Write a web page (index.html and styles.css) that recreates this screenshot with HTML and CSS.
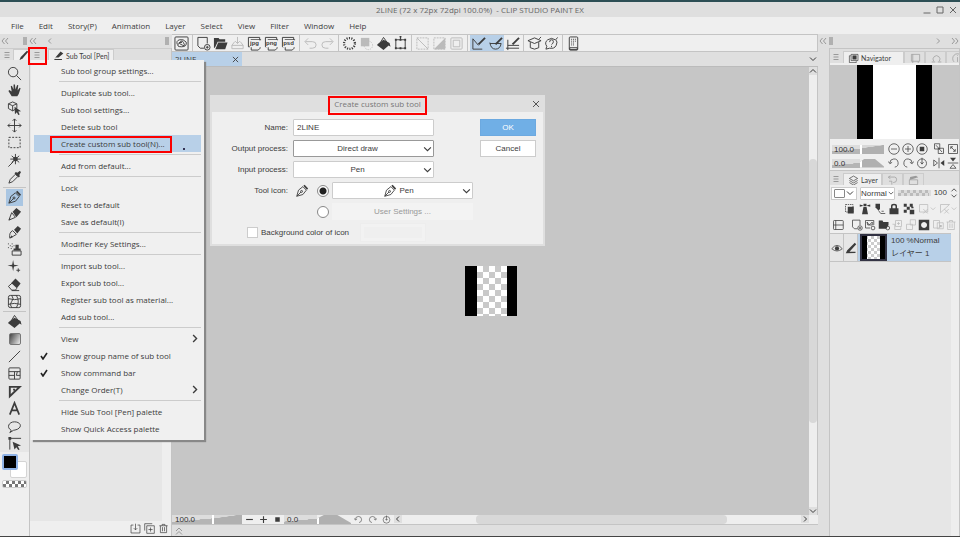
FILE: index.html
```html
<!DOCTYPE html>
<html lang="en">
<head>
<meta charset="utf-8">
<title>2LINE - CLIP STUDIO PAINT EX</title>
<link rel="stylesheet" href="styles.css">
</head>
<body>
<svg class="defs" aria-hidden="true">
  <symbol id="dleft" viewBox="0 0 8 8"><path d="M3.500 1 1 4l2.500 3M7 1 4.500 4 7 7"/></symbol>
  <symbol id="dright" viewBox="0 0 8 8"><path d="M1 1l2.500 3L1 7M4.500 1 7 4 4.500 7"/></symbol>
  <symbol id="dup" viewBox="0 0 8 8"><path d="M1 4l3-3 3 3M1 7.500l3-3 3 3"/></symbol>
  <symbol id="left" viewBox="0 0 8 8"><path d="M5 1.500 2.500 4 5 6.500"/></symbol>
  <symbol id="right" viewBox="0 0 8 8"><path d="M3 1.500 5.500 4 3 6.500"/></symbol>
  <symbol id="down" viewBox="0 0 8 8"><path d="M1 2.500 4 5.500l3-3"/></symbol>
  <symbol id="up" viewBox="0 0 8 8"><path d="M1 5.500 4 2.500l3 3"/></symbol>
  <symbol id="cross" viewBox="0 0 8 8"><path d="M1 1l6 6M7 1 1 7"/></symbol>
  <symbol id="burger" viewBox="0 0 8 8"><path d="M1.500 1.500h5M1.500 4h5M1.500 6.500h5"/></symbol>
  <symbol id="check" viewBox="0 0 8 8"><path d="M1 4l2 3 4-6" stroke-width="1.600"/></symbol>
  <symbol id="pen" viewBox="0 0 16 16"><path d="M2 14 4 7l5-4 4 4-4 5zM2 14l5-5"/><path class="f" d="M9.500 2 11 .8 15 5l-1.300 1.500z"/><circle cx="7.500" cy="8.500" r="1.100"/></symbol>
  <symbol id="undo" viewBox="0 0 16 16"><path d="M5.500 2.500 2 6l3.500 3.500M2.500 6H10q4 0 4 3.500T10 13H7"/></symbol>
  <symbol id="redo" viewBox="0 0 16 16"><path d="M10.500 2.500 14 6l-3.500 3.500M13.500 6H6Q2 6 2 9.500T6 13h3"/></symbol>
  <symbol id="rotl" viewBox="0 0 16 16"><path d="M9 13.500a5.500 5.500 0 1 0-6.500-5.500M.5 6l2 3 3-2"/></symbol>
  <symbol id="rotr" viewBox="0 0 16 16"><path d="M7 13.500a5.500 5.500 0 1 1 6.500-5.500M15.500 6l-2 3-3-2"/></symbol>
  <symbol id="reset" viewBox="0 0 16 16"><circle cx="8" cy="8.500" r="6"/><path d="M8 1v8M6 7l2 2.500L10 7"/></symbol>
  <symbol id="new" viewBox="0 0 16 16"><path d="M8.500 13H4.500L2 10.500V1.500h10V8"/><circle cx="12" cy="12" r="3"/><path d="M12 10.500v3M10.500 12h3"/></symbol>
  <symbol id="folder" viewBox="0 0 16 16"><path class="f" d="M1 2h5l1 1.500h6V6H5l-3 6.500H1zM5.500 6.800h10L13 14H2.500z"/></symbol>
  <symbol id="bucket" viewBox="0 0 16 16"><path class="f" d="M2.500 8 8 4l6.500 3.500 1 4-2-1.500L8 15 1 9.500z"/><path d="M4 8 8 1.500 12 7"/></symbol>
  <symbol id="trash" viewBox="0 0 16 16"><path d="M2 4h12M6 4V2h4v2M3.500 4v10h9V4M6.500 6v6M9.500 6v6"/></symbol>
  <symbol id="layers" viewBox="0 0 16 16"><path d="M2 5l6-3.500L14 5 8 8.500zM2 8l6 3.500L14 8M2 11l6 3.500 6-3.500"/></symbol>
  <symbol id="image" viewBox="0 0 16 16"><path d="M4.500 2h10v9h-10zM4 4H2v10h10v-2"/><path class="f" d="M6.500 3.500h6v6h-6z"/></symbol>
  <symbol id="file" viewBox="0 0 16 16"><path d="M3 11.500H1.500V1.500h12V4M14 12v1l-2 2H4.500v-3M4 4h11"/></symbol>
</svg>

<div class="app">
  <header class="titlebar">
    <h1>2LINE (72 x 72px 72dpi 100.0%)&nbsp; - CLIP STUDIO PAINT EX</h1>
    <div class="window-buttons">
      <button type="button" aria-label="Minimize"><svg viewBox="0 0 8 8"><path d="M.5 7h7"/></svg></button>
      <button type="button" aria-label="Maximize"><svg viewBox="0 0 8 8"><path d="M1 1h6v6H1z"/></svg></button>
      <button type="button" aria-label="Close"><svg><use href="#cross"/></svg></button>
    </div>
  </header>

  <nav class="menubar">
    <button type="button">File</button><button type="button">Edit</button><button type="button">Story(P)</button><button type="button">Animation</button><button type="button">Layer</button><button type="button">Select</button><button type="button">View</button><button type="button">Filter</button><button type="button">Window</button><button type="button">Help</button>
  </nav>

  <main class="workspace">
    <aside class="dock-left">
      <div class="dock-head">
        <svg><use href="#dleft"/></svg><i class="grip"></i><svg><use href="#dleft"/></svg><svg class="gap"><use href="#left"/></svg><i class="grip end"></i>
      </div>
      <div class="dock-columns">
        <section class="tool-palette">
          <div class="tabs">
            <button type="button" class="burger" aria-label="Tool menu"><svg><use href="#burger"/></svg></button>
            <div class="tab"><svg viewBox="0 0 16 16"><path class="f" d="M2 15l2-5L13 1l2 1.500L7 12z"/></svg></div>
          </div>
          <div class="tools">
            <div class="tool-group">
              <button type="button" aria-label="Magnify"><svg viewBox="0 0 16 16"><circle cx="6.500" cy="6.500" r="5"/><path d="M10 10l5 5"/></svg></button>
              <button type="button" aria-label="Hand"><svg viewBox="0 0 16 16"><path class="f" d="M5 14 1.500 8.500 2.500 7.500 5 9 4 3.500 5.200 3 7 7V1.500h1.500L9 7l1.800-5 1.200.4L11.300 8l2.200-3 1 .6-2 6L11 14z"/></svg></button>
              <button type="button" aria-label="Operation"><svg viewBox="0 0 16 16"><path d="M6 1l4.500 2v5L6 10.500 1.500 8V3zM1.500 3 6 5l4.500-2M6 5v5.500"/><path class="f" d="M8 6l7 5-3 .3 1.500 3-1.500.7-1.500-3L8.500 14z"/></svg></button>
              <button type="button" aria-label="Move layer"><svg viewBox="0 0 16 16"><path d="M8 1v14M1 8h14M6 3l2-2 2 2M6 13l2 2 2-2M3 6 1 8l2 2M13 6l2 2-2 2"/></svg></button>
              <button type="button" aria-label="Selection area"><svg viewBox="0 0 16 16"><path stroke-dasharray="2 1.500" d="M2 2.500h12v11H2z"/></svg></button>
              <button type="button" aria-label="Auto select"><svg viewBox="0 0 16 16"><path d="M9 1v11M5 3l8 7M13 3 5 10M3.500 6.500h11M7 9l-5.500 5.500"/><circle class="f" cx="9" cy="6.500" r="2.500"/></svg></button>
              <button type="button" aria-label="Eyedropper"><svg viewBox="0 0 16 16"><path d="M2 14l1.500-4L9 4.500 11.500 7 6 12.500z"/><path class="f" d="M8 3.500 12.500 8 14 6.500l-1-1L15 2l-1.500-1L11 3 9.500 2z"/></svg></button>
            </div>
            <hr>
            <div class="tool-group">
              <button type="button" class="active" aria-label="Pen"><svg><use href="#pen"/></svg></button>
              <button type="button" aria-label="Pencil"><svg viewBox="0 0 16 16"><path d="M2 14 5 6l4 5z"/><path class="f" d="M6 5l4-4 5 4-5 6zM2 14l2-1-1-1z"/></svg></button>
              <button type="button" aria-label="Brush"><svg viewBox="0 0 16 16"><path d="M3 14Q2 8 6 6l4 4Q7 12 3 14z"/><path class="f" d="M7.500 5l4-4 3.500 3-4 5zM3 14l2-3 1 2z"/></svg></button>
              <button type="button" aria-label="Airbrush"><svg viewBox="0 0 16 16"><path d="M1 2h1M3 4h1M1 6h1M5 2h1M5 5h1M4 7h1M7 4h1"/><path class="f" d="M9 3h3.500v4h2v2H7V7h2z"/><path d="M5.500 9.500h9.500V14H5.500z"/></svg></button>
              <button type="button" aria-label="Decoration"><svg viewBox="0 0 16 16"><path class="f" d="M6.500 1l1 5 5 1-5 1-1 5-1-5-5-1 5-1z"/><path d="M12 10v4M10 12h4"/></svg></button>
              <button type="button" aria-label="Eraser"><svg viewBox="0 0 16 16"><path d="M6 6 1.500 10l3.500 4h4l1.500-2M5 14.500h8"/><path class="f" d="M9 1.500 14.500 7 10.500 12 4.500 6.500z"/></svg></button>
              <button type="button" aria-label="Liquify"><svg viewBox="0 0 16 16"><rect x="1.500" y="1.500" width="13" height="13" rx="2"/><path d="M5 1.500Q8 5 5 8t0 6.500M10 1.500Q14 8 10 14.500M1.500 5Q8 7 14.500 5M1.500 11q6-2 13 0"/></svg></button>
            </div>
            <hr>
            <div class="tool-group last">
              <button type="button" aria-label="Fill"><svg><use href="#bucket"/></svg></button>
              <button type="button" aria-label="Gradient"><span class="gradient"></span></button>
              <button type="button" aria-label="Line"><svg viewBox="0 0 16 16"><path d="M2 14 14 2"/></svg></button>
              <button type="button" aria-label="Frame"><svg viewBox="0 0 16 16"><rect x="2" y="2" width="12" height="12" rx="1"/><path d="M2 6h12M2 10h6M8 6v8M11 6l-1 4h4"/></svg></button>
              <button type="button" aria-label="Ruler"><svg viewBox="0 0 16 16"><path stroke-width="2" d="M3 13V3h10.500zM6.500 6h2"/></svg></button>
              <button type="button" aria-label="Text"><svg viewBox="0 0 16 16"><path stroke-width="1.800" d="M3 14.500 8 2l5 12.500M5 10h6"/></svg></button>
              <button type="button" aria-label="Balloon"><svg viewBox="0 0 16 16"><path d="M4.500 12C-1 9 2 3 8 3s9 5 3 8q-3 1-4 1l-4 2.500z"/></svg></button>
              <button type="button" aria-label="Correct line"><svg viewBox="0 0 16 16"><path d="M3 2.500h12M3 2.500v12"/><path class="f" d="M1.500 1h3v3h-3zM6 6l9 4-3.500 1 2 3.500-1.500.5-2-3-2 2.500z"/></svg></button>
            </div>
          </div>
          <div class="swatches"><i class="sub"></i><i class="main"></i></div>
          <div class="transparent"></div>
        </section>

        <section class="subtool-palette">
          <div class="tabs">
            <button type="button" class="burger" aria-label="Sub tool menu"><svg><use href="#burger"/></svg></button>
            <div class="tab"><svg viewBox="0 0 16 16"><path class="f" d="M2 14l2-4L11 2l4 3-7 6H4zM2 13h11v1.500H2z"/></svg>Sub Tool [Pen]</div>
          </div>
          <div class="subtool-list"></div>
          <footer>
            <svg viewBox="0 0 16 16"><path d="M5 3H1.500v11.500h13V3H11M8 1v9M5.500 7.500 8 10l2.500-2.500"/></svg>
            <svg viewBox="0 0 16 16"><path d="M4 4h11v11H4zM1 11V1h11M9.500 6.500v6M6.500 9.500h6"/></svg>
            <svg><use href="#trash"/></svg>
          </footer>
        </section>
      </div>
    </aside>

    <section class="center">
      <div class="commandbar">
        <button type="button" class="home" aria-label="Clip Studio"><svg viewBox="0 0 16 16"><rect x="1" y="1" width="14" height="14" rx="1"/><path d="M3.500 9Q2 5 6 4t7 2.500q1 5-5 5T5 8t4-2.500T11 9 7.500 9t1-2"/></svg></button>
        <i class="sep"></i>
        <button type="button" aria-label="New"><svg><use href="#new"/></svg></button>
        <button type="button" aria-label="Open"><svg><use href="#folder"/></svg></button>
        <button type="button" disabled aria-label="Save"><svg viewBox="0 0 16 16"><path d="M5 6 2 10v3.500h12V10l-3-4M2 10h12M8 1v7M5.500 5.500 8 8l2.500-2.500"/></svg></button>
        <button type="button" class="export"><svg><use href="#file"/></svg><span>jpg</span></button>
        <button type="button" class="export"><svg><use href="#file"/></svg><span>png</span></button>
        <button type="button" class="export"><svg><use href="#file"/></svg><span>psd</span></button>
        <i class="sep"></i>
        <button type="button" disabled aria-label="Undo"><svg><use href="#undo"/></svg></button>
        <button type="button" disabled aria-label="Redo"><svg><use href="#redo"/></svg></button>
        <i class="sep"></i>
        <button type="button" aria-label="Clear"><svg viewBox="0 0 16 16"><circle cx="8" cy="8" r="5.800" stroke-width="2.400" stroke-dasharray="1.200 1.400"/></svg></button>
        <button type="button" disabled aria-label="Clear outside"><svg viewBox="0 0 16 16"><path class="f" d="M2 2h9v9H2z"/><circle cx="10" cy="10" r="4.500" stroke-dasharray="1 1"/></svg></button>
        <button type="button" aria-label="Fill"><svg><use href="#bucket"/></svg></button>
        <button type="button" aria-label="Transform"><svg viewBox="0 0 16 16"><path d="M3 4h10v9H3zM8 4V1"/><path class="f" d="M2 3h2v2H2zM12 3h2v2h-2zM2 12h2v2H2zM12 12h2v2h-2zM7 3h2v2H7zM7 12h2v2H7zM7 0h2v1.500H7z"/></svg></button>
        <i class="sep"></i>
        <button type="button" disabled aria-label="Deselect"><svg viewBox="0 0 16 16"><path stroke-dasharray="2 1" d="M2 2h12v12H2z"/><path d="M2 2l12 12"/></svg></button>
        <button type="button" disabled aria-label="Invert selection"><svg viewBox="0 0 16 16"><path stroke-dasharray="2 1" d="M2 2h12v12H2z"/><path class="f" d="M14 2v12H2z"/></svg></button>
        <button type="button" disabled aria-label="Selection border"><svg viewBox="0 0 16 16"><rect x="2" y="2" width="12" height="12" rx="1"/><path d="M4.500 4.500h7v7h-7z"/></svg></button>
        <i class="sep"></i>
        <button type="button" class="on" aria-label="Snap to ruler"><svg viewBox="0 0 16 16"><path d="M2 3v11h10M2 3l6 7"/><path d="M8 9l7-7" stroke-width="2"/></svg></button>
        <button type="button" class="on" aria-label="Snap to special ruler"><svg viewBox="0 0 16 16"><path d="M2 7q1 7 6 7t6-6M2 8h12"/><path d="M8 9l7-7" stroke-width="2"/></svg></button>
        <button type="button" aria-label="Snap to grid"><svg viewBox="0 0 16 16"><path d="M3 4v11M1 13h14M3 10h12"/><path d="M8 9l7-7" stroke-width="2"/></svg></button>
        <i class="sep"></i>
        <button type="button" aria-label="Tutorial"><svg viewBox="0 0 16 16"><path d="M1 5l7-3 7 3-7 3zM3.500 6.500v6q4.500 3 9 0v-6M13 3l2-2"/></svg></button>
        <button type="button" aria-label="Support"><svg viewBox="0 0 16 16"><path d="M12 4Q8 1 4 4t-1 7l-1 3 4-1q5 1 7-3t-.500-6l2-2.500M6 6.500Q6 4 8 4t2 2-2 3M8 10.500v1.500"/></svg></button>
        <i class="sep"></i>
        <button type="button" aria-label="Companion"><svg viewBox="0 0 16 16"><rect x="3.500" y="1" width="9" height="14" rx="1"/><path stroke-dasharray="1 1" d="M5.500 3.500h5M5.500 5.500h5M5.500 7.500h4M5.500 9.500h3"/><path d="M4 12.500h8v2H4z"/></svg></button>
      </div>

      <div class="document-tabs">
        <div class="document-tab"><span>2LINE</span><button type="button" aria-label="Close document"><svg><use href="#cross"/></svg></button></div>
        <svg><use href="#down"/></svg>
      </div>

      <div class="canvas-row">
        <div class="canvas"><div class="artboard"><i></i><i></i></div></div>
        <div class="vscroll"><svg><use href="#up"/></svg><i></i><svg><use href="#down"/></svg></div>
      </div>
      <div class="statusbar">
        <span class="meter zoom">100.0</span><i class="ramp"></i>
        <button type="button" aria-label="Zoom out"><svg viewBox="0 0 8 8"><path d="M1 4h6"/></svg></button>
        <button type="button" aria-label="Zoom in"><svg viewBox="0 0 8 8"><path d="M1 4h6M4 1v6"/></svg></button>
        <button type="button" aria-label="Fit"><svg viewBox="0 0 8 8"><path class="f" d="M2 2h4v4H2z"/></svg></button>
        <span class="meter angle">0.0</span><i class="hill"></i>
        <button type="button" aria-label="Rotate left"><svg><use href="#rotl"/></svg></button>
        <button type="button" aria-label="Rotate right"><svg><use href="#rotr"/></svg></button>
        <button type="button" aria-label="Reset rotation"><svg><use href="#reset"/></svg></button>
        <div class="hscroll"><svg><use href="#left"/></svg><i></i><svg><use href="#right"/></svg></div>
      </div>
      <div class="bottom-dock"><svg><use href="#dup"/></svg></div>
    </section>

    <aside class="dock-right">
      <div class="dock-head">
        <svg><use href="#dleft"/></svg><i class="grip"></i><svg class="end"><use href="#right"/></svg><svg><use href="#dright"/></svg>
      </div>
      <div class="right-panels">
        <section class="navigator">
          <div class="tabs">
            <button type="button" class="burger" aria-label="Navigator menu"><svg><use href="#burger"/></svg></button>
            <div class="tab wide"><svg><use href="#image"/></svg>Navigator</div>
            <div class="tab idle"><svg viewBox="0 0 16 16"><path d="M2 2h12v10H2zM4 12v3M12 12v3M4 2v10"/></svg></div>
            <div class="tab idle"><svg viewBox="0 0 16 16"><path d="M4 12a5 5 0 1 1 8 0M1 13h5M10 13h5"/></svg></div>
            <div class="tab idle"><svg viewBox="0 0 16 16"><path d="M3 13a7 7 0 1 1 10 0M8 6v7M8 3v1"/></svg></div>
          </div>
          <div class="preview"><i></i></div>
          <div class="nav-row">
            <span class="meter zoom">100.0</span><i class="ramp"></i>
            <svg viewBox="0 0 16 16"><circle cx="8" cy="8" r="7"/><path d="M4 8h8"/></svg>
            <svg viewBox="0 0 16 16"><circle cx="8" cy="8" r="7"/><path d="M4 8h8M8 4v8"/></svg>
            <svg viewBox="0 0 16 16"><circle cx="8" cy="8" r="7"/><path class="f" d="M5 5h6v6H5z"/></svg>
            <svg class="pair" viewBox="0 0 16 16"><path d="M2 1h7v7H2zM7 7h7v7H7zM4 3l8 9"/></svg>
            <svg viewBox="0 0 16 16"><path d="M2 2h12v12H2zM5 5l6 6M5 8V5h3M11 8v3H8"/></svg>
          </div>
          <div class="nav-row">
            <span class="meter angle">0.0</span><i class="hill"></i>
            <svg><use href="#rotl"/></svg><svg><use href="#rotr"/></svg><svg><use href="#reset"/></svg>
            <svg class="pair" viewBox="0 0 16 16"><path d="M8 1v14M1 4v8l5-4z"/><path class="f" d="M15 4v8l-5-4z"/></svg>
            <svg viewBox="0 0 16 16"><path d="M1 8h14M4 15h8l-4-5z"/><path class="f" d="M4 1h8L8 6z"/></svg>
          </div>
        </section>

        <section class="layers">
          <div class="tabs">
            <button type="button" class="burger" aria-label="Layer menu"><svg><use href="#burger"/></svg></button>
            <div class="tab"><svg><use href="#layers"/></svg>Layer</div>
            <div class="tab idle"><svg viewBox="0 0 16 16"><path d="M2 3h9q3 0 3 4t-5 4M5 1 2 3l3 3M3 9h4v5"/></svg></div>
            <div class="tab idle"><svg viewBox="0 0 16 16"><path d="M2 7h12v7H2zM2 6l11-4 1 2"/><path class="f" d="M3 3l9-2 1 3-10 3z"/></svg></div>
          </div>
          <div class="layer-row blend">
            <button type="button" class="palette-color" aria-label="Palette color"><i></i><svg><use href="#down"/></svg></button>
            <span class="select-wrap"><select aria-label="Blending mode"><option>Normal</option></select><svg><use href="#down"/></svg></span>
            <i class="opacity"></i><span class="value">100</span>
            <svg viewBox="0 0 8 12"><path d="M1 4l3-3 3 3M1 8l3 3 3-3"/></svg>
          </div>
          <div class="layer-row lock">
            <svg viewBox="0 0 16 16"><path d="M2 2h10v10H2z" stroke-dasharray="2 1"/><path class="f" d="M5 5h8v9H5z"/></svg>
            <svg viewBox="0 0 16 16"><path class="f" d="M6 5h4l2 10H4zM6 1h4v3H6zM1 2l4 1v1L1 5zM15 2l-4 1v1l4 1z"/></svg>
            <svg viewBox="0 0 16 16"><path class="f" d="M2 1h6v7l-2 2-4-4z"/><path d="M6 10l3 4h6M10 11h3"/></svg>
            <svg viewBox="0 0 16 16"><path class="f" d="M2 7h12v8H2z"/><path stroke-width="2" d="M5 8V4q0-2 3-2t3 2v4"/></svg>
            <svg viewBox="0 0 16 16"><path class="f" d="M1 1h4v4H1zM9 1h4v4H9zM5 5h4v4H5zM1 9h4v4H1zM9 9h6v6H9zM11 5h3v2h-3z"/></svg>
            <svg class="dim wide" viewBox="0 0 24 16"><path d="M2 2h11v10H2zM7 8l6 6M13 8l-6 6M17 6l3 3 3-3"/></svg>
            <svg class="dim wide" viewBox="0 0 24 16"><path d="M2 13V2h12zM7 8l6 6M13 8l-6 6M17 6l3 3 3-3"/></svg>
          </div>
          <div class="layer-row commands">
            <svg viewBox="0 0 16 16"><rect x="2" y="2" width="13" height="12" rx="1"/><path d="M2 8h13M5 2v12"/></svg>
            <svg class="first"><use href="#new"/></svg>
            <svg viewBox="0 0 16 16"><path d="M8 12H2V2h11v6M4 4l3 4 4-4v4H5z"/><circle cx="12" cy="12" r="2.500"/></svg>
            <svg viewBox="0 0 16 16"><path class="f" d="M1 2h5l1 2h7v4l-3 5H1z"/><circle cx="13" cy="12" r="2.500"/></svg>
            <svg class="dim" viewBox="0 0 16 16"><path d="M6 2h8v8H6zM2 7h3v7h8v-3M10 4v4M8 6h4"/></svg>
            <svg class="dim" viewBox="0 0 16 16"><path d="M7 1h7v7H7zM2 7h8v7H2z"/></svg>
            <svg viewBox="0 0 16 16"><path class="f" fill-rule="evenodd" d="M1 1h14v14H1zM8 4a4 4 0 1 0 .1 0z"/></svg>
            <svg class="dim" viewBox="0 0 16 16"><path d="M2 2h8v10H2zM7 5h8v8H7z"/><path class="f" d="M10 8h3v3h-3z"/></svg>
            <svg class="dim"><use href="#trash"/></svg>
          </div>
          <div class="layer-list">
            <div class="layer">
              <span class="cell"><svg viewBox="0 0 16 16"><path d="M1 9q7-9 14 0-7 6-14 0z"/><circle class="f" cx="8" cy="8.500" r="2.800"/></svg></span>
              <span class="cell"><svg viewBox="0 0 16 16"><path class="f" d="M1 15l2-4L13 1l2 2L6 13h8v1.500z"/></svg></span>
              <div class="layer-info">
                <div class="thumb"></div>
                <p>100 %Normal<br><span lang="ja">レイヤー 1</span></p>
              </div>
            </div>
          </div>
        </section>
      </div>
    </aside>
  </main>
</div>

<div class="mark burger-mark"></div>

<div class="popup" role="menu">
  <button type="button" role="menuitem">Sub tool group settings...</button>
  <hr>
  <button type="button" role="menuitem">Duplicate sub tool...</button>
  <button type="button" role="menuitem">Sub tool settings...</button>
  <button type="button" role="menuitem">Delete sub tool</button>
  <button type="button" role="menuitem" class="selected">Create custom sub tool(N)...<i class="mark"></i><i class="dot"></i></button>
  <hr>
  <button type="button" role="menuitem">Add from default...</button>
  <hr>
  <button type="button" role="menuitem">Lock</button>
  <button type="button" role="menuitem">Reset to default</button>
  <button type="button" role="menuitem">Save as default(I)</button>
  <hr>
  <button type="button" role="menuitem">Modifier Key Settings...</button>
  <hr>
  <button type="button" role="menuitem">Import sub tool...</button>
  <button type="button" role="menuitem">Export sub tool...</button>
  <button type="button" role="menuitem">Register sub tool as material...</button>
  <button type="button" role="menuitem">Add sub tool...</button>
  <hr>
  <button type="button" role="menuitem">View<svg class="more"><use href="#right"/></svg></button>
  <button type="button" role="menuitem"><svg class="tick"><use href="#check"/></svg>Show group name of sub tool</button>
  <button type="button" role="menuitem"><svg class="tick"><use href="#check"/></svg>Show command bar</button>
  <button type="button" role="menuitem">Change Order(T)<svg class="more"><use href="#right"/></svg></button>
  <hr>
  <button type="button" role="menuitem">Hide Sub Tool [Pen] palette</button>
  <button type="button" role="menuitem">Show Quick Access palette</button>
</div>

<div class="dialog" role="dialog" aria-labelledby="dialog-title">
  <div class="dialog-head">
    <h2 id="dialog-title">Create custom sub tool<i class="mark"></i></h2>
    <button type="button" aria-label="Close dialog"><svg><use href="#cross"/></svg></button>
  </div>
  <form class="dialog-body">
    <div class="fields">
      <div class="field"><label for="name">Name:</label><input id="name" type="text" value="2LINE"></div>
      <div class="field"><label for="output">Output process:</label><span class="select-wrap focus"><select id="output"><option>Direct draw</option></select><svg><use href="#down"/></svg></span></div>
      <div class="field"><label for="input">Input process:</label><span class="select-wrap"><select id="input"><option>Pen</option></select><svg><use href="#down"/></svg></span></div>
      <div class="field"><label for="icon">Tool icon:</label><svg class="tool-icon"><use href="#pen"/></svg><input type="radio" name="source" aria-label="Preset icon" checked><span class="select-wrap"><select id="icon" class="with-icon"><option>Pen</option></select><svg class="inner"><use href="#pen"/></svg><svg><use href="#down"/></svg></span></div>
      <div class="field user"><input type="radio" name="source" aria-label="User icon"><button type="button" disabled>User Settings ...</button></div>
      <div class="field background"><input id="bg" type="checkbox"><label for="bg">Background color of icon</label><span class="color"></span></div>
    </div>
    <div class="actions"><button type="button" class="primary">OK</button><button type="button">Cancel</button></div>
  </form>
</div>
</body>
</html>
```

FILE: styles.css
```css
* { box-sizing: border-box; }

:root {
  --bar: #dfdfdf;
  --panel: #efefef;
  --list: #e6e6e6;
  --line: #c4c4c4;
  --canvas: #c6c6c6;
  --blue: #b8d0e8;
  --ink: #3c3c3c;
  --ui: "Open Sans", "Noto Sans", sans-serif;
  --jp: "Liberation Sans", "Noto Sans CJK JP", sans-serif;
}

body {
  margin: 0;
  background: var(--bar);
  color: var(--ink);
  font: 8px/12px var(--ui);
}

button, input, select { margin: 0; padding: 0; font: inherit; color: inherit; border: 0; background: none; }
h1, h2, p { margin: 0; font: inherit; }
hr { margin: 0; border: 0; }
i { display: block; flex: none; }

svg { display: block; flex: none; width: 8px; height: 8px; fill: none; stroke: currentColor; stroke-width: 1; }
.f { fill: currentColor; stroke: none; }
.defs { position: absolute; width: 0; height: 0; }
.mark { border: 2px solid #fb0000; pointer-events: none; }

.app {
  display: flex;
  flex-direction: column;
  height: 100vh;
  border-top: 2px solid #2d4f55;
  border-bottom: 1px solid #444;
}

.titlebar { display: flex; align-items: center; justify-content: center; height: 15px; color: #666; position: relative; }
.window-buttons { position: absolute; right: 3px; display: flex; gap: 5px; }

.menubar { display: flex; gap: 15px; height: 17px; padding-left: 11px; background: var(--panel); }

.workspace { display: grid; grid-template-columns: 172px minmax(0, 1fr) 142px; flex: 1; min-height: 0; }

.dock-left, .dock-right, .center { display: flex; flex-direction: column; min-width: 0; min-height: 0; }
.dock-head { display: flex; align-items: center; height: 14px; color: #999; }
.grip { width: 4px; height: 8px; background: #b0b0b0; }
.dock-left .dock-head { padding: 0 3px 0 1px; }
.dock-left .grip { margin: 0 2px 0 14px; }
.dock-head .gap { margin-left: 9px; }
.dock-left .end { margin: 0 0 0 auto; }

.dock-columns { display: grid; grid-template-columns: 30px minmax(0, 1fr); flex: 1; min-height: 0; }
.tool-palette, .subtool-palette { display: flex; flex-direction: column; border-right: 1px solid var(--line); background: var(--panel); }

.tabs { display: flex; height: 12px; background: var(--bar); overflow: hidden; border-top: 1px solid #ccc; }
.burger { flex: none; width: 13px; padding-left: 3px; color: #999; }
.tab { display: flex; align-items: center; gap: 2px; flex: none; padding: 1px 3px 0 4px; background: var(--panel); border: solid #ccc; border-width: 1px 1px 0; font: 7px/10px Lato, "Open Sans", sans-serif; white-space: nowrap; }
.tab svg { width: 11px; height: 11px; }
.tab.wide { width: 61px; }
.tab.idle { width: 21px; justify-content: center; background: var(--bar); color: #999; }
.subtool-palette .burger { width: 18px; }

.tools { padding: 5px 3px 0; background: var(--list); }
.tool-group { display: flex; flex-direction: column; align-items: center; justify-content: space-between; height: 121px; }
.tool-group.last { height: 139px; }
.tool-group button { display: grid; place-items: center; width: 17px; height: 17px; }
.tool-group svg { width: 15px; height: 15px; }
.tool-group .active { background: #aac6e2; }
.tools hr { height: 1px; margin: 1px 0; background: var(--line); }
.gradient { width: 12px; height: 12px; border: 1px solid #777; border-radius: 2px; background: linear-gradient(120deg, #444, #eee); }

.swatches { display: grid; padding: 2px 2px 0; }
.swatches i { grid-area: 1 / 1; }
.swatches .main { width: 16px; height: 16px; border: 2px solid #8fb2e6; border-radius: 2px; background: #000; }
.swatches .sub { justify-self: end; width: 17px; height: 17px; margin-top: 7px; border: 1px solid #d4d4d4; border-radius: 2px; background: #fff; }
.transparent { height: 8px; margin: 2px; border: 1px solid #ccc; border-radius: 2px; background: repeating-conic-gradient(#777 0 25%, #fff 0 50%) 0 0 / 6px 6px; }

.subtool-list { flex: 1; background: var(--list); border-right: 9px solid #eee; }
.subtool-palette footer { display: flex; align-items: center; justify-content: flex-end; gap: 3px; height: 15px; padding-right: 2px; }
.subtool-palette footer svg { width: 11px; height: 11px; }

.commandbar { display: flex; align-items: center; height: 18px; border: 1px solid var(--line); border-width: 1px 1px 1px 0; background: var(--panel); }
.commandbar button { display: grid; place-items: center; flex: none; width: 17px; height: 16px; }
.commandbar svg { width: 15px; height: 15px; }
.commandbar .home { width: 18px; }
.commandbar .sep { width: 1px; height: 16px; margin: 0 2px; background: var(--line); }
.commandbar button:disabled { color: #bbb; }
.commandbar .on { background: var(--blue); }
.commandbar .export { grid-template-columns: 17px; }
.export span { grid-area: 1 / 1; z-index: 1; font: bold 6px/7px "Liberation Sans", sans-serif; background: var(--panel); }
.export svg { grid-area: 1 / 1; }

.document-tabs { display: flex; align-items: center; justify-content: space-between; height: 15px; padding-right: 1px; border-bottom: 1px solid #bbb; }
.document-tab { display: flex; align-items: center; justify-content: space-between; width: 70px; height: 14px; padding: 0 3px; background: var(--blue); }
.document-tab svg { width: 7px; height: 7px; }

.canvas-row { display: flex; flex: 1; min-height: 0; }
.canvas { display: grid; place-items: center; flex: 1; background: var(--canvas); }
.artboard { display: flex; justify-content: space-between; width: 52px; height: 50px; background: repeating-conic-gradient(#c9c9c9 0 25%, #fff 0 50%) 12px 0 / 12px 12px; }
.artboard i { width: 12px; background: #000; }
.artboard i:last-child { width: 10px; }

.vscroll, .hscroll { display: flex; background: #eee; }
.vscroll { flex-direction: column; width: 9px; border-right: 1px solid var(--line); }
.vscroll svg, .hscroll svg { background: var(--bar); }
.vscroll i { flex: 270; margin-top: 84px; border-radius: 4px; background: #d8d8d8; }
.vscroll svg:last-child { margin-top: 84px; }

.statusbar { display: flex; align-items: center; height: 10px; border-bottom: 1px solid var(--line); background: var(--panel); }
.statusbar button { width: 14px; height: 9px; padding-left: 3px; }
.statusbar button svg { width: 9px; height: 9px; }
.hscroll { flex: 1; height: 9px; margin-left: 1px; }
.hscroll i { flex: 250; margin-left: 74px; border-radius: 4px; background: #d8d8d8; }
.hscroll svg:last-child { margin: 0 9px 0 74px; }
.meter { flex: none; overflow: hidden; height: 9px; padding-left: 3px; color: #333; font: 8px/9px var(--jp); background: linear-gradient(175deg, #ddd 55%, #b5b5b5 56%); }
.meter.zoom { width: 40px; }
.meter.angle { width: 33px; }
.ramp, .hill { width: 30px; height: 9px; border-left: 2px solid #fff; background: linear-gradient(172deg, #d8d8d8 25%, #b0b0b0 28%); }
.hill { width: 34px; background: #b0b0b0; clip-path: polygon(0 40%, 20% 0, 60% 0, 100% 90%, 100% 100%, 0 100%); }

.bottom-dock { height: 11px; padding: 2px 3px; color: #999; }

.dock-right .dock-head { padding: 0 1px; }
.dock-right .grip { margin: 0 0 0 2px; }
.dock-right .end { margin-left: auto; margin-right: 9px; }
.right-panels { display: flex; flex-direction: column; flex: 1; min-height: 0; margin-left: 11px; }
.navigator, .layers { border: solid var(--line); border-width: 1px 1px 0; background: var(--panel); }
.right-panels .tabs { height: 14px; padding-top: 2px; border-top: 0; }
.right-panels .burger { padding-left: 2px; }
.navigator { height: 122px; }
.preview { height: 76px; margin-bottom: 3px; border-top: 2px solid var(--panel); background: var(--canvas); display: flex; justify-content: center; }
.preview i { width: 75px; border: solid #000; border-width: 0 16px; background: #fff; }
.nav-row { display: flex; align-items: center; height: 14px; padding: 0 2px; gap: 2px; }
.nav-row svg { width: 12px; height: 12px; }
.nav-row .meter { margin-right: -2px; padding-left: 2px; }
.nav-row .meter.zoom, .nav-row .meter.angle { width: 28px; }
.nav-row .ramp, .nav-row .hill { width: 24px; margin-right: 2px; }
.nav-row .pair { margin-left: 3px; }

.layers { display: flex; flex-direction: column; flex: 1; }
.layer-row { display: flex; align-items: center; height: 16px; padding: 0 2px; }
.layer-row svg { width: 12px; height: 12px; }
.layer-row .dim { color: #bbb; }
.blend { gap: 3px; padding: 0 1px; font: 8px/12px var(--jp); }
.blend svg { width: 8px; height: 10px; }
.palette-color { display: flex; align-items: center; justify-content: space-between; width: 26px; height: 13px; padding: 2px; border: 1px solid #ccc; background: #fff; }
.palette-color i { width: 11px; height: 9px; border: 1px solid #888; border-radius: 1px; }
.blend .select-wrap { width: 35px; height: 13px; }
.blend .select-wrap select { padding: 0; text-align-last: left; }
.blend .select-wrap svg { right: 0; width: 6px; }
.opacity { flex: 1; height: 6px; border-right: 2px solid #ddd; background: repeating-conic-gradient(#bbb 0 25%, #ddd 0 50%) 0 0 / 6px 6px; }
.lock { justify-content: space-between; padding-left: 14px; }
.layer-row .wide { width: 18px; }
.commands { justify-content: space-between; }
.commands .first { margin-left: 5px; }

.layer-list { flex: 1; border-right: 8px solid #eee; background: var(--list); }
.layer { display: flex; height: 29px; border-bottom: 1px solid var(--line); border-top: 1px solid var(--line); }
.cell { display: grid; place-items: center; width: 14px; border-right: 1px solid var(--line); }
.cell svg { width: 12px; height: 12px; }
.layer-info { display: flex; flex: 1; gap: 4px; padding-left: 2px; background: var(--blue); font: 8px/13px var(--jp); white-space: nowrap; }
.thumb { width: 27px; height: 27px; border: solid #334; border-width: 2px; background: linear-gradient(90deg, #000 5px, transparent 5px 18px, #000 18px), repeating-conic-gradient(#ccc 0 25%, #fff 0 50%) 0 0 / 6px 6px; }

.burger-mark { position: absolute; top: 47px; left: 28px; width: 19px; height: 18px; z-index: 3; }

.popup { position: absolute; top: 60px; left: 31px; z-index: 2; width: 173px; padding: 2px 3px 3px; background: #f0f0f0; box-shadow: 2px 2px 1px #888; }
.popup button { position: relative; display: block; width: 100%; height: 17px; padding-left: 27px; text-align: left; }
.popup hr { height: 1px; margin: 2px 0 2px 25px; background: #ccc; }
.popup .selected { background: var(--blue); }
.popup .mark { position: absolute; inset: 1px 29px -1px 16px; }
.popup .dot { position: absolute; right: 16px; bottom: 2px; width: 2px; height: 2px; background: #335; }
.popup .tick { position: absolute; left: 6px; top: 5px; color: #222; }
.popup .more { position: absolute; right: 1px; top: 3px; width: 11px; height: 11px; }

.dialog { position: absolute; top: 95px; left: 210px; width: 335px; border: 2px solid var(--bar); border-top: 0; background: var(--panel); }
.dialog-head { display: flex; align-items: center; justify-content: center; height: 17px; background: var(--bar); color: #777; }
.dialog-head h2 { position: relative; }
.dialog-head .mark { position: absolute; inset: -2px -6px -5px; }
.dialog-head button { position: absolute; right: 3px; color: #555; }
.dialog-body { display: flex; justify-content: space-between; padding: 7px 7px 3px 0; font: 8px/12px var(--jp); }
.fields, .actions { display: flex; flex-direction: column; gap: 4px; }
.field { display: flex; align-items: center; height: 17px; }
.field > label { width: 76px; margin-right: 5px; text-align: right; }
.field > input[type="text"] { width: 141px; height: 17px; padding-left: 3px; border: 1px solid #ccc; border-radius: 1px; background: #fff; }
.select-wrap { position: relative; display: block; width: 141px; height: 17px; border: 1px solid #ccc; border-radius: 1px; background: #fff; }
.select-wrap.focus { border-color: #999; }
.select-wrap select { display: block; width: 100%; height: 100%; padding: 0 12px 0 0; appearance: none; text-align-last: center; }
.select-wrap svg { position: absolute; right: 1px; top: 50%; translate: 0 -50%; pointer-events: none; }
.field .select-wrap svg { right: 1px; width: 9px; height: 9px; }
.field .select-wrap .inner { right: 75px; width: 14px; height: 14px; }
.field .with-icon { padding-left: 20px; }
.tool-icon { width: 14px; height: 14px; margin: 0 8px 0 2px; }
input[type="radio"] { flex: none; width: 12px; height: 12px; margin-right: 3px; appearance: none; border: 1px solid #888; border-radius: 50%; background: #fff; }
input[type="radio"]:checked { background: radial-gradient(circle, #222 0 3px, #fff 4px); }
.user { padding-left: 105px; }
.user button { width: 141px; height: 17px; background: #f3f3f3; color: #999; }
.background { padding-left: 35px; }
.background input { width: 11px; height: 11px; appearance: none; border: 1px solid #ccc; background: #fff; }
.background > label { width: auto; margin: 0 12px 0 3px; }
.color { width: 64px; height: 17px; border: 3px solid #f2f2f2; outline: 1px solid #ededed; }
.actions button { width: 56px; height: 17px; border: 1px solid #ccc; background: #fff; }
.actions .primary { border-color: #6ca9e0; background: #70afe6; color: #fff; }
```
